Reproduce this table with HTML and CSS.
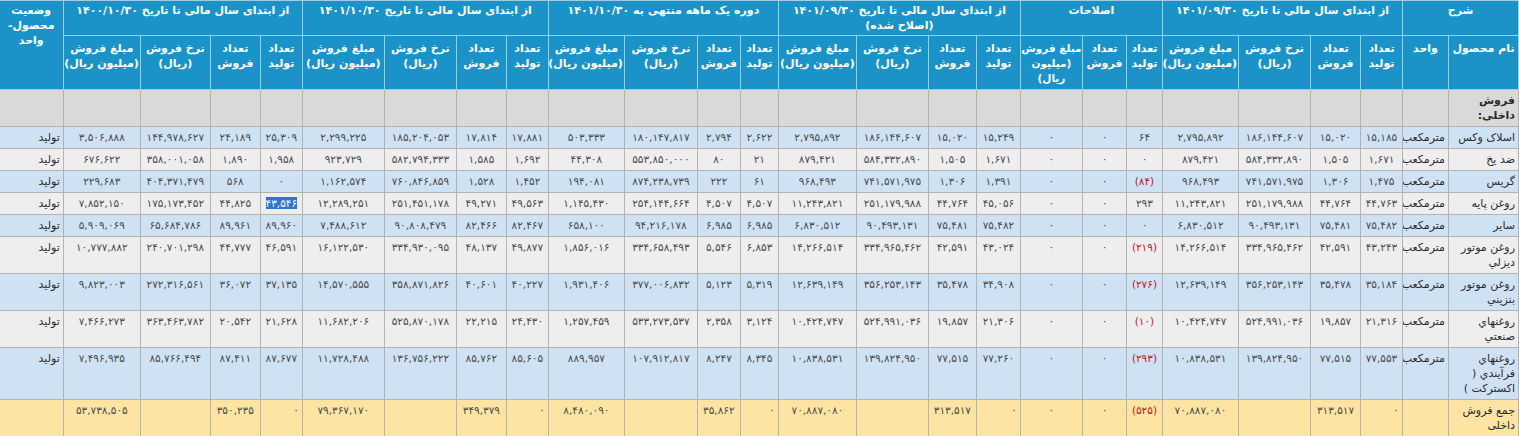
FILE: index.html
```html
<!DOCTYPE html>
<html lang="fa" dir="rtl">
<head>
<meta charset="utf-8">
<title>فروش داخلی</title>
<link rel="stylesheet" href="styles.css">
</head>
<body>
<table class="report">
<colgroup>
<col style="width:70px"><col style="width:46px">
<col style="width:42px"><col style="width:50px"><col style="width:72px"><col style="width:76px">
<col style="width:36px"><col style="width:44px"><col style="width:62px">
<col style="width:44px"><col style="width:48px"><col style="width:72px"><col style="width:78px">
<col style="width:38px"><col style="width:43px"><col style="width:73px"><col style="width:76px">
<col style="width:42px"><col style="width:50px"><col style="width:72px"><col style="width:82px">
<col style="width:42px"><col style="width:50px"><col style="width:70px"><col style="width:77px">
<col style="width:64px">
</colgroup>
<thead>
<tr class="grp">
<th colspan="2">شرح</th>
<th colspan="4">از ابتدای سال مالی تا تاریخ ۱۴۰۱/۰۹/۳۰</th>
<th colspan="3">اصلاحات</th>
<th colspan="4">از ابتدای سال مالی تا تاریخ ۱۴۰۱/۰۹/۳۰<br>(اصلاح شده)</th>
<th colspan="4">دوره یک ماهه منتهی به ۱۴۰۱/۱۰/۳۰</th>
<th colspan="4">از ابتدای سال مالی تا تاریخ ۱۴۰۱/۱۰/۳۰</th>
<th colspan="4">از ابتدای سال مالی تا تاریخ ۱۴۰۰/۱۰/۳۰</th>
<th rowspan="2">وضعیت<br>محصول-<br>واحد</th>
</tr>
<tr class="sub">
<th>نام محصول</th><th>واحد</th>
<th>تعداد<br>تولید</th><th>تعداد<br>فروش</th><th>نرخ فروش<br>(ریال)</th><th>مبلغ فروش<br>(میلیون ریال)</th>
<th>تعداد<br>تولید</th><th>تعداد<br>فروش</th><th class="tight">مبلغ فروش<br>(میلیون<br>ریال)</th>
<th>تعداد<br>تولید</th><th>تعداد<br>فروش</th><th>نرخ فروش<br>(ریال)</th><th>مبلغ فروش<br>(میلیون ریال)</th>
<th>تعداد<br>تولید</th><th>تعداد<br>فروش</th><th>نرخ فروش<br>(ریال)</th><th>مبلغ فروش<br>(میلیون ریال)</th>
<th>تعداد<br>تولید</th><th>تعداد<br>فروش</th><th>نرخ فروش<br>(ریال)</th><th>مبلغ فروش<br>(میلیون ریال)</th>
<th>تعداد<br>تولید</th><th>تعداد<br>فروش</th><th>نرخ فروش<br>(ریال)</th><th>مبلغ فروش<br>(میلیون ریال)</th>
</tr>
</thead>
<tbody>
<tr class="title">
<td class="name strong">فروش<br>داخلی:</td><td></td><td></td><td></td><td></td><td></td><td></td><td></td><td></td><td></td><td></td><td></td><td></td><td></td><td></td><td></td><td></td><td></td><td></td><td></td><td></td><td></td><td></td><td></td><td></td><td></td>
</tr>
<tr class="b">
<td class="name">اسلاک وکس</td><td class="unit">مترمکعب</td><td>۱۵,۱۸۵</td><td>۱۵,۰۲۰</td><td>۱۸۶,۱۴۴,۶۰۷</td><td>۲,۷۹۵,۸۹۲</td><td>۶۴</td><td>۰</td><td>۰</td><td>۱۵,۲۴۹</td><td>۱۵,۰۲۰</td><td>۱۸۶,۱۴۴,۶۰۷</td><td>۲,۷۹۵,۸۹۲</td><td>۲,۶۲۲</td><td>۲,۷۹۴</td><td>۱۸۰,۱۴۷,۸۱۷</td><td>۵۰۳,۳۳۳</td><td>۱۷,۸۸۱</td><td>۱۷,۸۱۴</td><td>۱۸۵,۲۰۴,۰۵۳</td><td>۲,۲۹۹,۲۲۵</td><td>۲۵,۳۰۹</td><td>۲۴,۱۸۹</td><td>۱۴۴,۹۷۸,۶۲۷</td><td>۳,۵۰۶,۸۸۸</td><td class="stat">تولید</td>
</tr>
<tr class="g">
<td class="name">ضد یخ</td><td class="unit">مترمکعب</td><td>۱,۶۷۱</td><td>۱,۵۰۵</td><td>۵۸۴,۳۳۲,۸۹۰</td><td>۸۷۹,۴۲۱</td><td>۰</td><td>۰</td><td>۰</td><td>۱,۶۷۱</td><td>۱,۵۰۵</td><td>۵۸۴,۳۳۲,۸۹۰</td><td>۸۷۹,۴۲۱</td><td>۲۱</td><td>۸۰</td><td>۵۵۳,۸۵۰,۰۰۰</td><td>۴۴,۳۰۸</td><td>۱,۶۹۲</td><td>۱,۵۸۵</td><td>۵۸۲,۷۹۴,۳۳۳</td><td>۹۲۳,۷۲۹</td><td>۱,۹۵۸</td><td>۱,۸۹۰</td><td>۳۵۸,۰۰۱,۰۵۸</td><td>۶۷۶,۶۲۲</td><td class="stat">تولید</td>
</tr>
<tr class="b">
<td class="name">گریس</td><td class="unit">مترمکعب</td><td>۱,۴۷۵</td><td>۱,۳۰۶</td><td>۷۴۱,۵۷۱,۹۷۵</td><td>۹۶۸,۴۹۳</td><td class="neg">(۸۴)</td><td>۰</td><td>۰</td><td>۱,۳۹۱</td><td>۱,۳۰۶</td><td>۷۴۱,۵۷۱,۹۷۵</td><td>۹۶۸,۴۹۳</td><td>۶۱</td><td>۲۲۲</td><td>۸۷۴,۲۳۸,۷۳۹</td><td>۱۹۴,۰۸۱</td><td>۱,۴۵۲</td><td>۱,۵۲۸</td><td>۷۶۰,۸۴۶,۸۵۹</td><td>۱,۱۶۲,۵۷۴</td><td>۰</td><td>۵۶۸</td><td>۴۰۴,۳۷۱,۴۷۹</td><td>۲۲۹,۶۸۳</td><td class="stat">تولید</td>
</tr>
<tr class="g">
<td class="name">روغن پایه</td><td class="unit">مترمکعب</td><td>۴۴,۷۶۳</td><td>۴۴,۷۶۴</td><td>۲۵۱,۱۷۹,۹۸۸</td><td>۱۱,۲۴۳,۸۲۱</td><td>۲۹۳</td><td>۰</td><td>۰</td><td>۴۵,۰۵۶</td><td>۴۴,۷۶۴</td><td>۲۵۱,۱۷۹,۹۸۸</td><td>۱۱,۲۴۳,۸۲۱</td><td>۴,۵۰۷</td><td>۴,۵۰۷</td><td>۲۵۴,۱۴۴,۶۶۴</td><td>۱,۱۴۵,۴۳۰</td><td>۴۹,۵۶۳</td><td>۴۹,۲۷۱</td><td>۲۵۱,۴۵۱,۱۷۸</td><td>۱۲,۲۸۹,۲۵۱</td><td><span class="sel">۴۳,۵۴۶</span></td><td>۴۴,۸۲۵</td><td>۱۷۵,۱۷۳,۴۵۲</td><td>۷,۸۵۲,۱۵۰</td><td class="stat">تولید</td>
</tr>
<tr class="b">
<td class="name">سایر</td><td class="unit">مترمکعب</td><td>۷۵,۴۸۲</td><td>۷۵,۴۸۱</td><td>۹۰,۴۹۳,۱۳۱</td><td>۶,۸۳۰,۵۱۲</td><td>۰</td><td>۰</td><td>۰</td><td>۷۵,۴۸۲</td><td>۷۵,۴۸۱</td><td>۹۰,۴۹۳,۱۳۱</td><td>۶,۸۳۰,۵۱۲</td><td>۶,۹۸۵</td><td>۶,۹۸۵</td><td>۹۴,۲۱۶,۱۷۸</td><td>۶۵۸,۱۰۰</td><td>۸۲,۴۶۷</td><td>۸۲,۴۶۶</td><td>۹۰,۸۰۸,۴۷۹</td><td>۷,۴۸۸,۶۱۲</td><td>۸۹,۹۶۰</td><td>۸۹,۹۶۱</td><td>۶۵,۶۸۴,۷۸۶</td><td>۵,۹۰۹,۰۶۹</td><td class="stat">تولید</td>
</tr>
<tr class="g">
<td class="name">روغن موتور<br>ديزلي</td><td class="unit">مترمکعب</td><td>۴۳,۲۴۳</td><td>۴۲,۵۹۱</td><td>۳۳۴,۹۶۵,۴۶۲</td><td>۱۴,۲۶۶,۵۱۴</td><td class="neg">(۲۱۹)</td><td>۰</td><td>۰</td><td>۴۳,۰۲۴</td><td>۴۲,۵۹۱</td><td>۳۳۴,۹۶۵,۴۶۲</td><td>۱۴,۲۶۶,۵۱۴</td><td>۶,۸۵۳</td><td>۵,۵۴۶</td><td>۳۳۴,۶۵۸,۴۹۳</td><td>۱,۸۵۶,۰۱۶</td><td>۴۹,۸۷۷</td><td>۴۸,۱۳۷</td><td>۳۳۴,۹۳۰,۰۹۵</td><td>۱۶,۱۲۲,۵۳۰</td><td>۴۶,۵۹۱</td><td>۴۴,۷۷۷</td><td>۲۴۰,۷۰۱,۲۹۸</td><td>۱۰,۷۷۷,۸۸۲</td><td class="stat">تولید</td>
</tr>
<tr class="b">
<td class="name">روغن موتور<br>بنزيني</td><td class="unit">مترمکعب</td><td>۳۵,۱۸۴</td><td>۳۵,۴۷۸</td><td>۳۵۶,۲۵۳,۱۴۳</td><td>۱۲,۶۳۹,۱۴۹</td><td class="neg">(۲۷۶)</td><td>۰</td><td>۰</td><td>۳۴,۹۰۸</td><td>۳۵,۴۷۸</td><td>۳۵۶,۲۵۳,۱۴۳</td><td>۱۲,۶۳۹,۱۴۹</td><td>۵,۳۱۹</td><td>۵,۱۲۳</td><td>۳۷۷,۰۰۶,۸۳۲</td><td>۱,۹۳۱,۴۰۶</td><td>۴۰,۲۲۷</td><td>۴۰,۶۰۱</td><td>۳۵۸,۸۷۱,۸۲۶</td><td>۱۴,۵۷۰,۵۵۵</td><td>۳۷,۱۳۵</td><td>۳۶,۰۷۲</td><td>۲۷۲,۳۱۶,۵۶۱</td><td>۹,۸۲۳,۰۰۳</td><td class="stat">تولید</td>
</tr>
<tr class="g">
<td class="name">روغنهاي<br>صنعتي</td><td class="unit">مترمکعب</td><td>۲۱,۳۱۶</td><td>۱۹,۸۵۷</td><td>۵۲۴,۹۹۱,۰۳۶</td><td>۱۰,۴۲۴,۷۴۷</td><td class="neg">(۱۰)</td><td>۰</td><td>۰</td><td>۲۱,۳۰۶</td><td>۱۹,۸۵۷</td><td>۵۲۴,۹۹۱,۰۳۶</td><td>۱۰,۴۲۴,۷۴۷</td><td>۳,۱۲۴</td><td>۲,۳۵۸</td><td>۵۳۳,۲۷۳,۵۳۷</td><td>۱,۲۵۷,۴۵۹</td><td>۲۴,۴۳۰</td><td>۲۲,۲۱۵</td><td>۵۲۵,۸۷۰,۱۷۸</td><td>۱۱,۶۸۲,۲۰۶</td><td>۲۱,۶۲۸</td><td>۲۰,۵۴۲</td><td>۳۶۳,۴۶۳,۷۸۲</td><td>۷,۴۶۶,۲۷۳</td><td class="stat">تولید</td>
</tr>
<tr class="b">
<td class="name">روغنهاي<br>فرآيندي (<br>اکسترکت )</td><td class="unit">مترمکعب</td><td>۷۷,۵۵۳</td><td>۷۷,۵۱۵</td><td>۱۳۹,۸۲۴,۹۵۰</td><td>۱۰,۸۳۸,۵۳۱</td><td class="neg">(۲۹۳)</td><td>۰</td><td>۰</td><td>۷۷,۲۶۰</td><td>۷۷,۵۱۵</td><td>۱۳۹,۸۲۴,۹۵۰</td><td>۱۰,۸۳۸,۵۳۱</td><td>۸,۳۴۵</td><td>۸,۲۴۷</td><td>۱۰۷,۹۱۲,۸۱۷</td><td>۸۸۹,۹۵۷</td><td>۸۵,۶۰۵</td><td>۸۵,۷۶۲</td><td>۱۳۶,۷۵۶,۲۲۲</td><td>۱۱,۷۲۸,۴۸۸</td><td>۸۷,۶۷۷</td><td>۸۷,۴۱۱</td><td>۸۵,۷۶۶,۴۹۴</td><td>۷,۴۹۶,۹۳۵</td><td class="stat">تولید</td>
</tr>
<tr class="total">
<td class="name">جمع فروش<br>داخلی</td><td></td><td class="end">۰</td><td>۳۱۳,۵۱۷</td><td></td><td>۷۰,۸۸۷,۰۸۰</td><td class="neg">(۵۲۵)</td><td>۰</td><td>۰</td><td class="end">۰</td><td>۳۱۳,۵۱۷</td><td></td><td>۷۰,۸۸۷,۰۸۰</td><td class="end">۰</td><td>۳۵,۸۶۲</td><td></td><td>۸,۴۸۰,۰۹۰</td><td class="end">۰</td><td>۳۴۹,۳۷۹</td><td></td><td>۷۹,۳۶۷,۱۷۰</td><td class="end">۰</td><td>۳۵۰,۲۳۵</td><td></td><td>۵۳,۷۳۸,۵۰۵</td><td></td>
</tr>
</tbody>
</table>
</body>
</html>
```

FILE: styles.css
```css
html, body {
  margin: 0;
  padding: 0;
  background: #ffffff;
}

body {
  font-family: Tahoma, "DejaVu Sans", sans-serif;
}

.report {
  width: 1519px;
  table-layout: fixed;
  border-collapse: collapse;
  direction: rtl;
  font-size: 10.5px;
  line-height: 15px;
  color: #4a4a4a;
}

.report th,
.report td {
  border: 1px solid #b3b3b3;
  padding: 3px 3px;
  vertical-align: top;
  text-align: center;
  white-space: nowrap;
  overflow: hidden;
}

.report thead th {
  background: #1b93c8;
  color: #ffffff;
  font-weight: bold;
  font-size: 11px;
  border-color: #9ccfe7;
  padding: 2px 1px;
  overflow: visible;
}

.report thead .sub th {
  padding: 5px 1px 3px;
}

.report thead .sub th.tight {
  font-size: 10.5px;
  padding-left: 0;
  padding-right: 0;
}

.report tbody .title td {
  background: #d9d9d9;
}

.report tbody .b td {
  background: #cfe2f3;
}

.report tbody .g td {
  background: #eeeeee;
}

.report tbody .total td {
  background: #fde4a2;
}

.report td.name {
  text-align: right;
  color: #2b2b2b;
  font-size: 11px;
}

.report td.strong {
  font-weight: bold;
}

.report td.unit,
.report td.stat {
  text-align: right;
  color: #2b2b2b;
  font-size: 11px;
}

.report td.end {
  text-align: right;
}

.report td.neg {
  color: #c0141c;
}

.sel {
  background: #2f74d4;
  color: #ffffff;
}
```
